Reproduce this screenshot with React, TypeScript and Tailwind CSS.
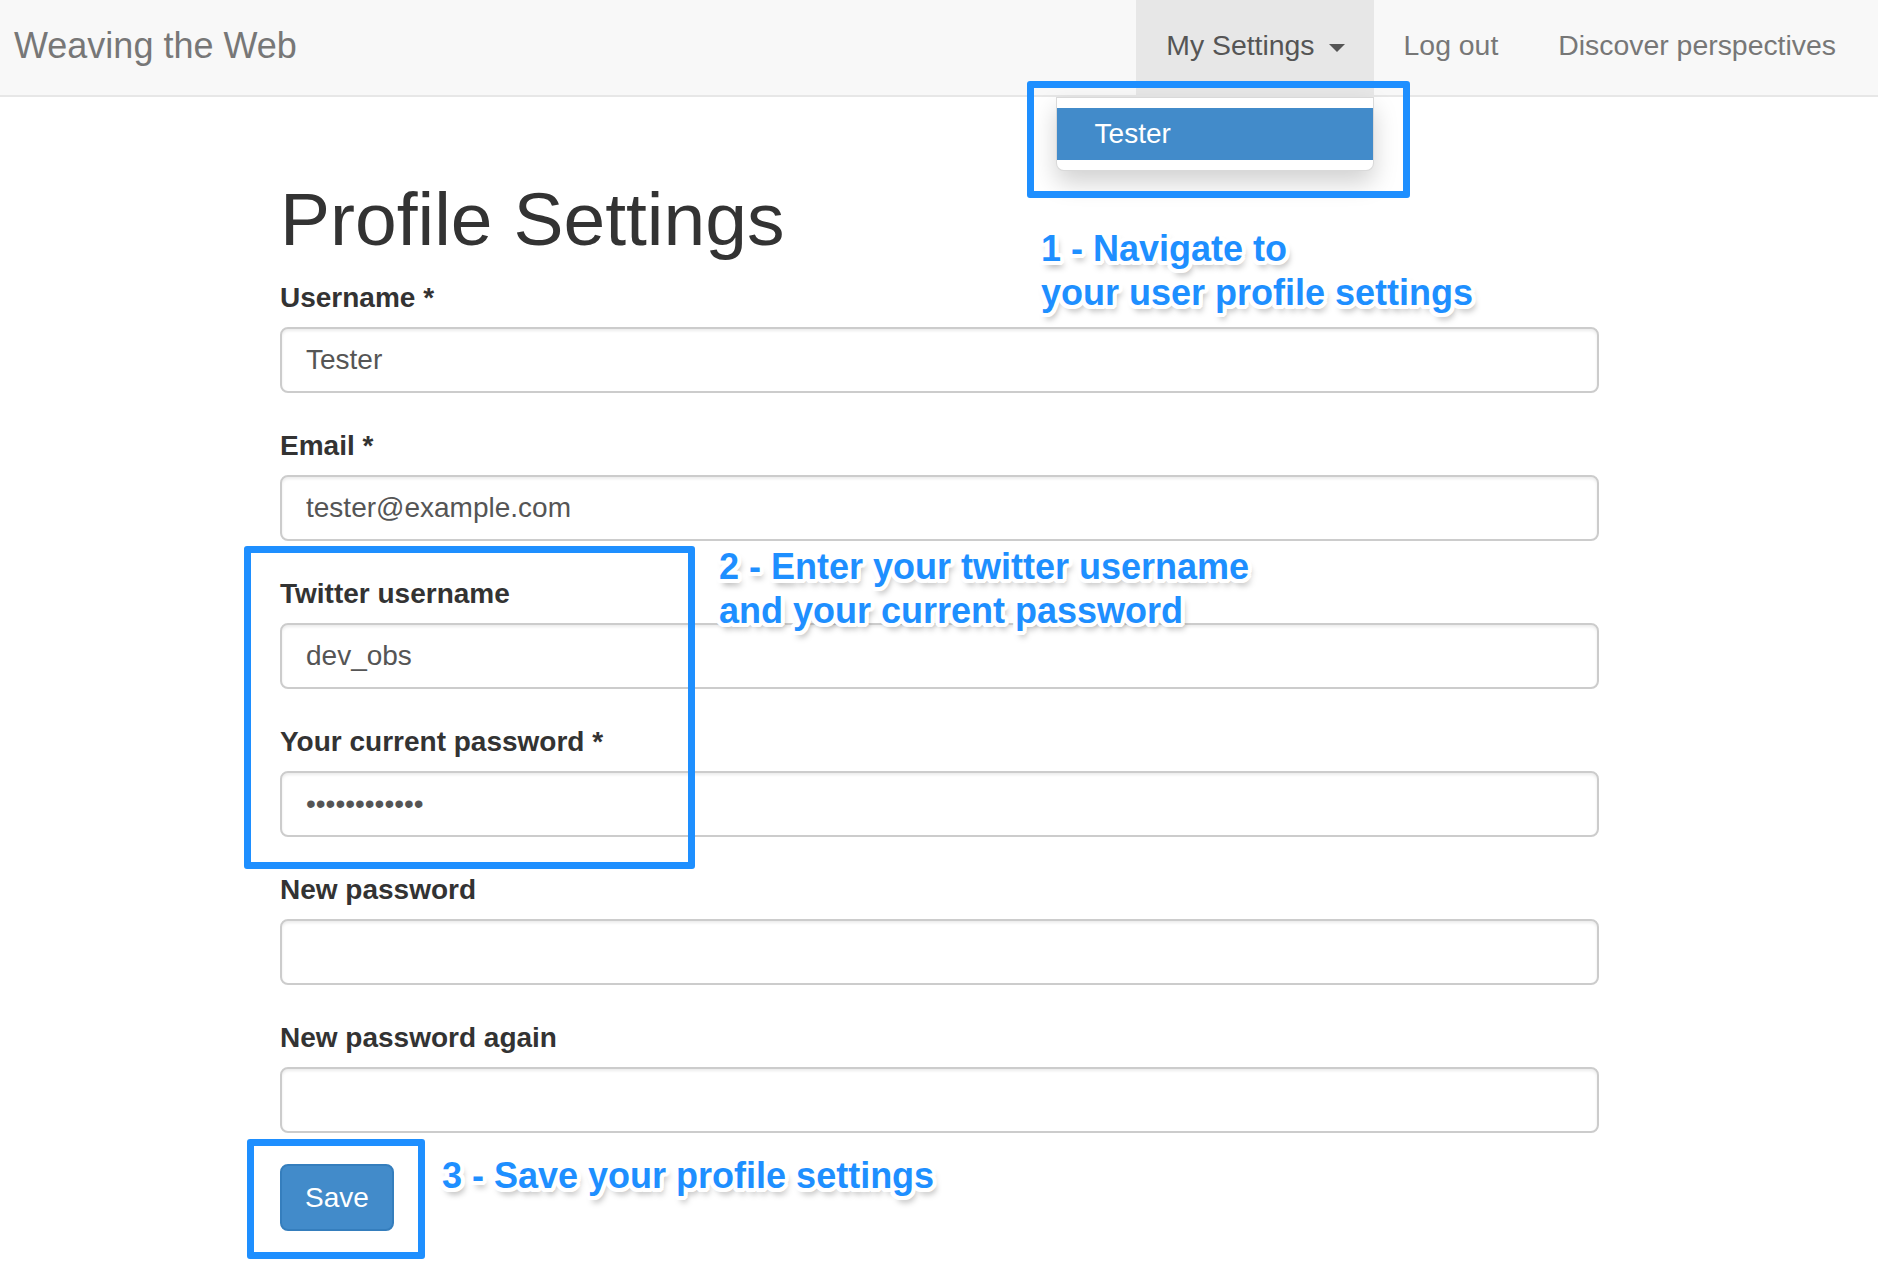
import React from "react";

const FONT = "[font-family:'Liberation_Sans',Arial,Helvetica,sans-serif]";

const annot =
  "absolute whitespace-nowrap font-bold text-[36px] leading-[44px] text-[#1e8fff] " +
  "[text-shadow:0_-4px_0_#fff,0_4px_0_#fff,-4px_0_0_#fff,4px_0_0_#fff,-3px_-3px_0_#fff,3px_-3px_0_#fff,-3px_3px_0_#fff,3px_3px_0_#fff,-2px_-4px_0_#fff,2px_-4px_0_#fff,-2px_4px_0_#fff,2px_4px_0_#fff,-4px_-2px_0_#fff,4px_-2px_0_#fff,-4px_2px_0_#fff,4px_2px_0_#fff,3px_6px_6px_rgba(0,0,0,0.35)]";

function Field({ label, value }: { label: string; value?: string }) {
  return (
    <div className="mb-[30px] flex flex-col gap-[6px]">
      <label className="block text-[28px] leading-[46px] font-bold text-[#333]">{label}</label>
      <input
        type="text"
        readOnly
        defaultValue={value ?? ""}
        className={`${FONT} block w-full h-[66px] px-[24px] text-[28px] text-[#555] bg-white border-2 border-[#cccccc] rounded-[8px] shadow-[inset_0_2px_3px_rgba(0,0,0,0.08)] outline-none`}
      />
    </div>
  );
}

export default function App() {
  return (
    <div className={`${FONT} relative w-full min-h-[1282px] bg-white overflow-hidden`}>
      {/* Navbar */}
      <nav className="relative z-10 flex h-[97px] items-stretch justify-between bg-[#f8f8f8] border-b-2 border-[#e7e7e7]">
        <div className="flex items-center pl-[14px] pb-[4px] text-[36px] text-[#777]">Weaving the Web</div>
        <ul className="flex items-stretch pr-[12px] text-[28.4px]">
          <li className="relative flex items-center bg-[#e7e7e7] pl-[30px] pr-[29px] pb-[4px] text-[#555]">
            <span>My Settings</span>
            <span className="ml-[14px] mt-[4px] w-0 h-0 border-x-[8px] border-x-transparent border-t-[8px] border-t-[#555]" />
            {/* dropdown */}
            <div className="absolute right-0 top-[97px] w-[318px] bg-white border border-[rgba(0,0,0,0.15)] rounded-b-[8px] py-[10px] shadow-[0_12px_24px_rgba(0,0,0,0.18)]">
              <div className="h-[52px] leading-[52px] pl-[38px] bg-[#428bca] text-white text-[28px]">Tester</div>
            </div>
          </li>
          <li className="flex items-center px-[30px] pb-[4px] text-[#777]">Log out</li>
          <li className="flex items-center px-[30px] pb-[4px] text-[#777]">Discover perspectives</li>
        </ul>
      </nav>

      {/* Form */}
      <main className="ml-[280px] w-[1319px] pt-[82px] flex flex-col items-start">
        <h1 className="text-[75px] leading-[81px] text-[#333] mb-[15px]">Profile Settings</h1>
        <div className="w-full">
          <Field label="Username *" value="Tester" />
          <Field label="Email *" value="tester@example.com" />
          <Field label="Twitter username" value="dev_obs" />
          <Field label="Your current password *" value="••••••••••••" />
          <Field label="New password" />
          <Field label="New password again" />
        </div>
        <button className="mt-[1px] h-[67px] px-[23px] bg-[#428bca] border-2 border-[#357ebd] rounded-[8px] text-white text-[28px]">
          Save
        </button>
      </main>

      {/* Annotation boxes */}
      <div className="absolute z-20 left-[1027px] top-[81px] w-[383px] h-[117px] border-[7px] border-[#1e8fff] rounded-[3px]" />
      <div className="absolute z-20 left-[244px] top-[546px] w-[451px] h-[323px] border-[7px] border-[#1e8fff] rounded-[3px]" />
      <div className="absolute z-20 left-[247px] top-[1139px] w-[178px] h-[120px] border-[7px] border-[#1e8fff] rounded-[3px]" />

      {/* Annotation texts */}
      <div className={`${annot} z-20 left-[1041px] top-[227px]`}>
        1 - Navigate to
        <br />
        your user profile settings
      </div>
      <div className={`${annot} z-20 left-[719px] top-[545px]`}>
        2 - Enter your twitter username
        <br />
        and your current password
      </div>
      <div className={`${annot} z-20 left-[442px] top-[1154px]`}>3 - Save your profile settings</div>
    </div>
  );
}
